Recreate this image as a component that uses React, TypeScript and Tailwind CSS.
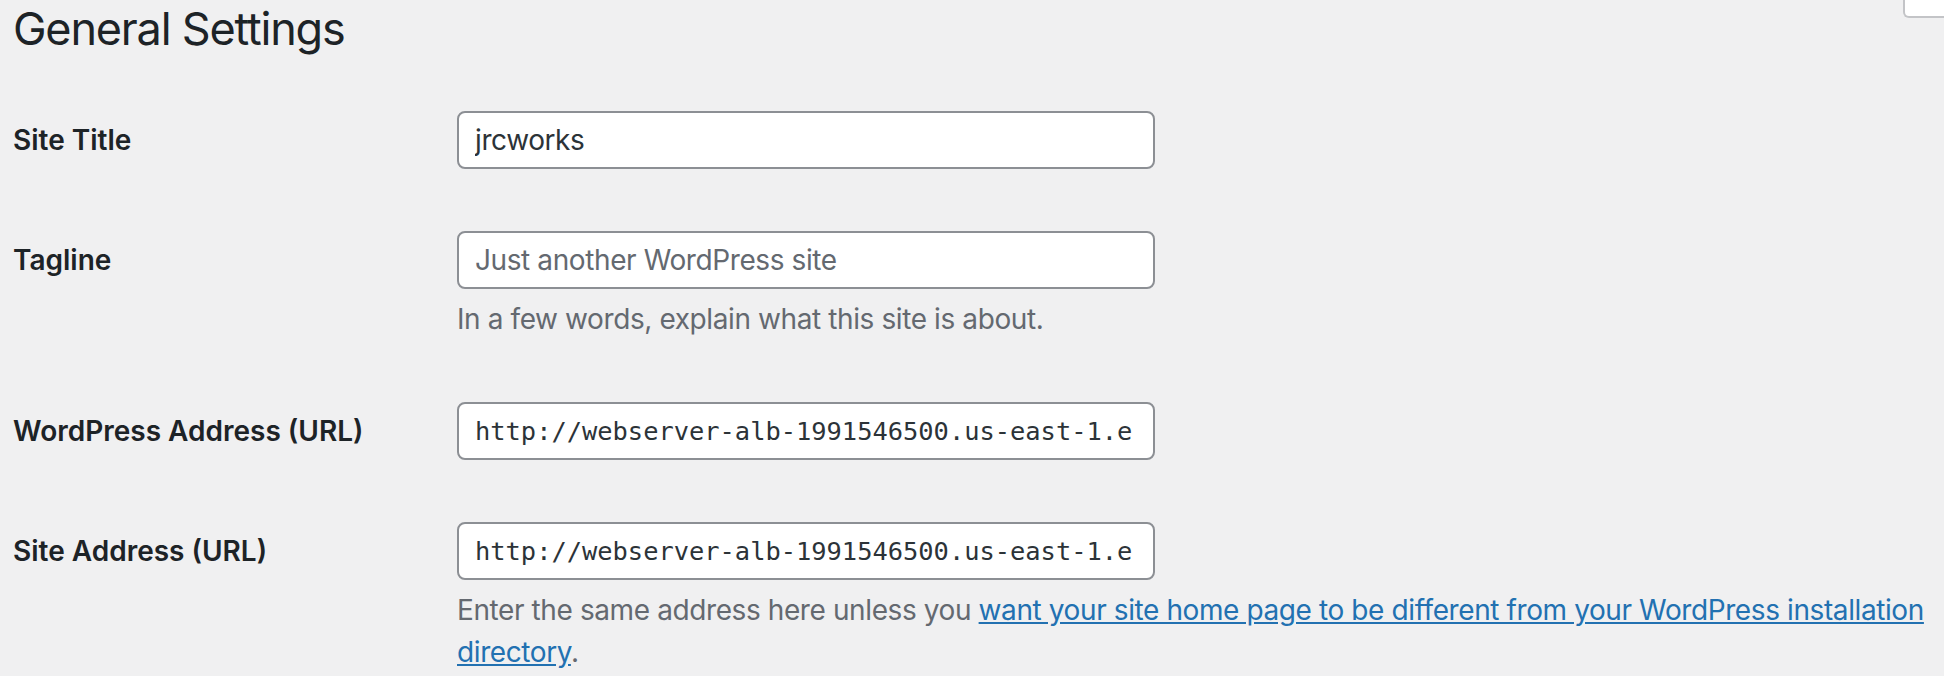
import React from 'react';

interface RowProps {
  label: string;
  children: React.ReactNode;
}

const Row: React.FC<RowProps> = ({ label, children }) => (
  <div className="flex py-[31px]">
    <div className="w-[444px] shrink-0 text-[28px] font-semibold leading-[58px] text-[#1d2327]">{label}</div>
    <div className="flex-1 min-w-0">{children}</div>
  </div>
);

const fieldBox =
  'block h-[58px] w-[698px] rounded-[8px] border-2 border-[#8c8f94] bg-white px-[16px] text-[#2c3338] outline-none';

// Safari-style text field: the overflowing url is clipped at the content edge
const UrlField: React.FC<{ value: string }> = ({ value }) => (
  <div className={`${fieldBox} flex items-center`}>
    <div className="w-[658px] overflow-hidden whitespace-nowrap font-['DejaVu_Sans_Mono',monospace] text-[25.4px] leading-[54px]">
      {value}
    </div>
  </div>
);

const url = 'http://webserver-alb-1991546500.us-east-1.elb.amazonaws.com';

export default function App() {
  return (
    <div className="relative min-h-screen w-full bg-[#f0f0f1] pl-[13px] font-['Inter',sans-serif] text-[#1d2327]">
      {/* help tab peeking in from the top right */}
      <div className="absolute right-0 top-0 h-[18px] w-[41px] rounded-bl-[6px] border-b-2 border-l-2 border-[#c3c4c7] bg-white" />

      <h1 className="h-[80px] pt-[6px] text-[45px] font-normal leading-[46px] tracking-[-1.2px]">General Settings</h1>

      <Row label="Site Title">
        <input readOnly value="jrcworks" className={`${fieldBox} text-[28px] tracking-[-0.4px]`} />
      </Row>

      <Row label="Tagline">
        <input
          readOnly
          placeholder="Just another WordPress site"
          className={`${fieldBox} text-[28px] tracking-[-0.4px] placeholder:text-[#646970]`}
        />
        <p className="mt-[9px] text-[28px] leading-[42px] tracking-[-0.4px] text-[#646970]">
          In a few words, explain what this site is about.
        </p>
      </Row>

      <Row label="WordPress Address (URL)">
        <UrlField value={url} />
      </Row>

      <Row label="Site Address (URL)">
        <UrlField value={url} />
        <p className="mt-[9px] text-[28px] leading-[42px] tracking-[-0.4px] text-[#646970]">
          <span className="whitespace-nowrap">
            Enter the same address here unless you{' '}
            <a href="#" className="text-[#2271b1] underline">
              want your site home page to be different from your WordPress installation
            </a>
          </span>
          <br />
          <a href="#" className="text-[#2271b1] underline">
            directory
          </a>
          .
        </p>
      </Row>
    </div>
  );
}
